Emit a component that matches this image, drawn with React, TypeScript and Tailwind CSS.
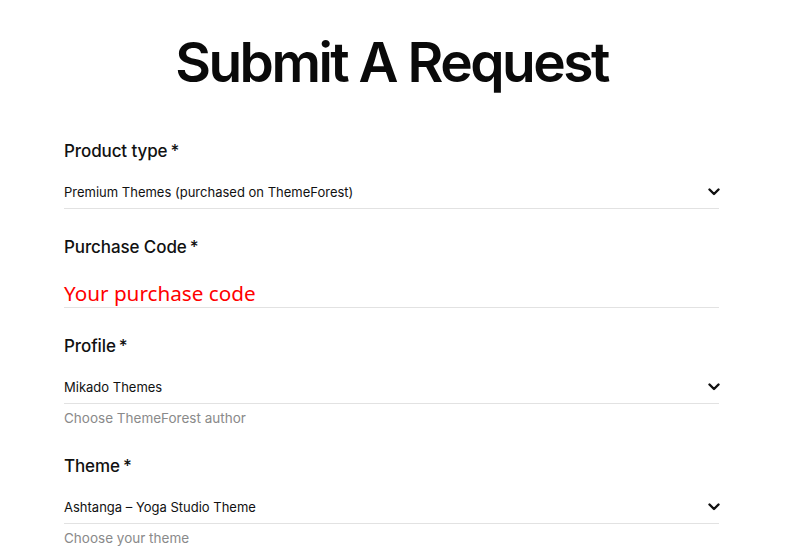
import React from "react";

const font = { fontFamily: "Inter, 'Noto Sans', sans-serif" };

function Chevron() {
  return (
    <svg width="12" height="8" viewBox="0 0 12 8" className="shrink-0 mr-[-1px]">
      <path d="M1.5 1.5 L6 6 L10.5 1.5" fill="none" stroke="#111" strokeWidth="2.4" strokeLinecap="round" strokeLinejoin="round" />
    </svg>
  );
}

function Label({ children }: { children: React.ReactNode }) {
  return (
    <div className="h-[24px] leading-[24px] text-[17px] font-medium text-[#111] tracking-[-0.1px]">
      {children}
      <span className="ml-[3px]">*</span>
    </div>
  );
}

function SelectField({ label, value, helper }: { label: string; value: string; helper?: string }) {
  return (
    <div className="flex flex-col">
      <Label>{label}</Label>
      <div className="flex items-center justify-between pt-[19px] pb-[6px] border-b border-[#e2e2e2]">
        <span className="text-[13px] leading-[20px] text-[#111]">{value}</span>
        <Chevron />
      </div>
      {helper && (
        <div className="mt-[4px] text-[13.5px] leading-[20px] text-[#8a8a8a]">{helper}</div>
      )}
    </div>
  );
}

export default function App() {
  return (
    <div className="w-[803px] h-[558px] bg-white overflow-hidden" style={font}>
      <div className="w-[783px]">
        <h1 className="text-center text-[55px] font-semibold leading-[64px] pt-[30px] text-[#0a0a0a] tracking-[-2.5px]">
          Submit A Request
        </h1>
        <div className="px-[64px] pt-[45px] flex flex-col">
          <SelectField label="Product type" value="Premium Themes (purchased on ThemeForest)" />
          <div className="mt-[26px] flex flex-col">
            <Label>Purchase Code</Label>
            <div className="pt-[21px] border-b border-[#e2e2e2]">
              <div
                className="leading-[27px] text-[#ff0000]"
                style={{ fontFamily: "'Noto Sans', 'Open Sans', sans-serif", fontSize: "20.7px" }}
              >
                Your purchase code
              </div>
            </div>
          </div>
          <div className="mt-[26px]">
            <SelectField label="Profile" value="Mikado Themes" helper="Choose ThemeForest author" />
          </div>
          <div className="mt-[26px]">
            <SelectField label="Theme" value="Ashtanga – Yoga Studio Theme" helper="Choose your theme" />
          </div>
        </div>
      </div>
    </div>
  );
}
